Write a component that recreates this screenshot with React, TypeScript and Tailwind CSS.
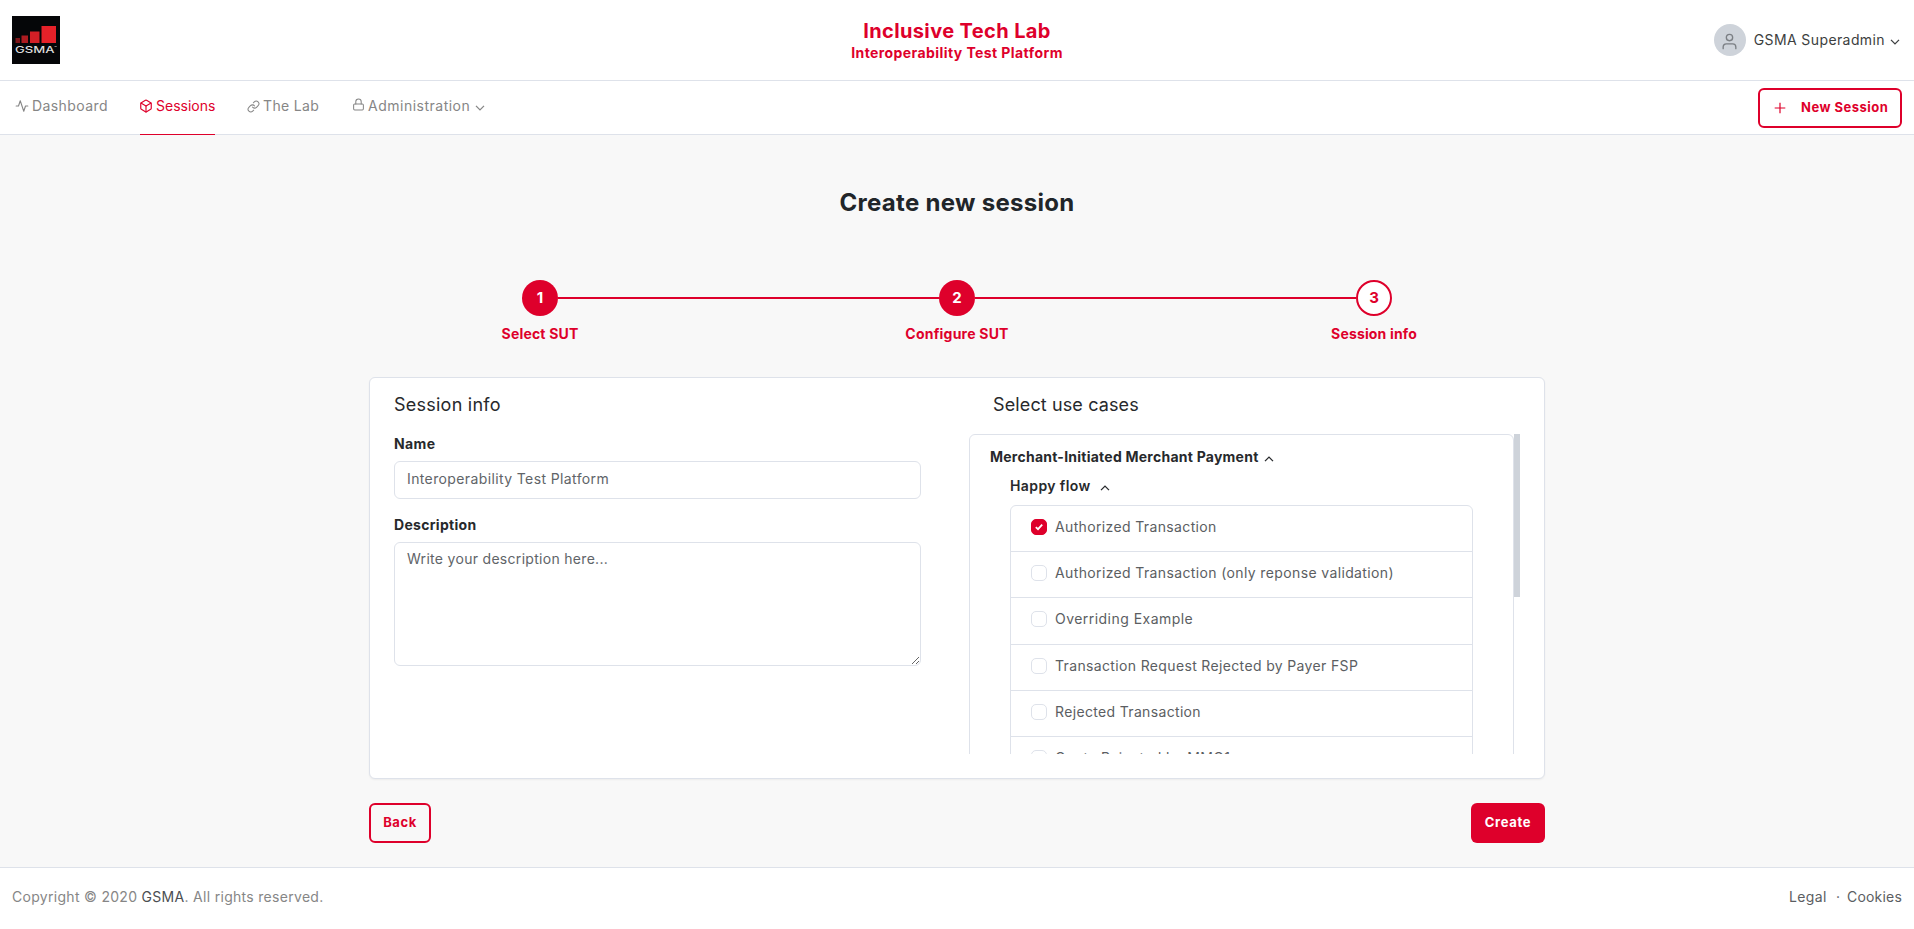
import { useState } from "react";
import { FiActivity, FiBox, FiLink, FiLock, FiUser } from "react-icons/fi";

function Chevron({ up = false, className = "" }: { up?: boolean; className?: string }) {
  return (
    <svg viewBox="0 0 10 6" width="10" height="6" fill="none" stroke="currentColor" strokeWidth="1.3" className={className}>
      <path d={up ? "M1 5.1 5 1.1 9 5.1" : "M1 .9 5 4.9 9 .9"} />
    </svg>
  );
}

function Logo() {
  return (
    <svg viewBox="0 0 48 48" width="48" height="48" role="img" aria-label="GSMA">
      <rect width="48" height="48" fill="#050608" />
      <rect x="3.5" y="22" width="4.5" height="5" fill="#7d1519" />
      <rect x="9.5" y="19.5" width="6.5" height="7.5" fill="#ac1b20" />
      <rect x="18" y="15.5" width="9.5" height="11.5" fill="#d31f26" />
      <rect x="29.5" y="10" width="14.5" height="17" fill="#e62129" />
      <text x="3" y="37" textLength="39.5" lengthAdjust="spacingAndGlyphs" fontFamily="Inter, sans-serif" fontSize="9.3" fontWeight="500" fill="#dcdcdc">
        GSMA
      </text>
      <rect x="42.5" y="30" width="2.2" height="0.9" fill="#8a8a8a" />
    </svg>
  );
}

const useCases = [
  { label: "Authorized Transaction", tracking: "tracking-[0.36px]" },
  { label: "Authorized Transaction (only reponse validation)", tracking: "tracking-[0.37px]" },
  { label: "Overriding Example", tracking: "tracking-[0.46px]" },
  { label: "Transaction Request Rejected by Payer FSP", tracking: "tracking-[0.35px]" },
  { label: "Rejected Transaction", tracking: "tracking-[0.34px]" },
  { label: "Quote Rejected by MMO1", tracking: "tracking-[0.36px]" },
];

function Header() {
  return (
    <header className="flex h-[81px] items-center justify-between border-b border-[#dee2ea] bg-white px-3">
      <div className="w-[300px]">
        <Logo />
      </div>
      <div className="pt-[1px] text-center font-bold text-[#de002b]">
        <div className="text-[20px] leading-6 tracking-[0.38px]">Inclusive Tech Lab</div>
        <div className="text-[14px] leading-5 tracking-[0.42px]">Interoperability Test Platform</div>
      </div>
      <div className="flex w-[300px] items-center justify-end">
        <span className="flex size-8 items-center justify-center rounded-full bg-[#ced3da] text-[#7b7f84]">
          <FiUser className="mt-[3px] size-[19px]" strokeWidth={1.7} />
        </span>
        <span className="ml-2 pb-px text-[14px] tracking-[0.4px] text-[#3c3e40]">GSMA Superadmin</span>
        <Chevron className="ml-[5px] mr-[2px] mt-[3px] text-[#3c3e40]" />
      </div>
    </header>
  );
}

function Nav() {
  return (
    <nav className="flex h-[54px] items-stretch justify-between border-b border-[#dee2ea] bg-white pl-[15px] pr-3 text-[14px] text-[#868686]">
      <div className="flex items-stretch pb-[3px]">
        <a className="flex w-[125px] items-center">
          <FiActivity className="mr-[3px] size-[14px]" strokeWidth={1.9} />
          <span className="pb-[2px] tracking-[0.42px]">Dashboard</span>
        </a>
        <a className="-mb-1 flex w-[75px] items-center border-b border-[#de002b] pb-[3px] text-[#de002b]">
          <FiBox className="-ml-px mr-[3px] size-[14px] shrink-0" strokeWidth={2} />
          <span className="pb-[2px] tracking-[0px]">Sessions</span>
        </a>
        <a className="ml-8 flex w-[105px] items-center">
          <FiLink className="mr-[3px] size-[13px]" strokeWidth={1.9} />
          <span className="pb-[2px] tracking-[0.35px]">The Lab</span>
        </a>
        <a className="flex items-center">
          <FiLock className="mb-1 mr-[3px] size-[13px]" strokeWidth={1.9} />
          <span className="pb-[2px] tracking-[0.5px]">Administration</span>
          <Chevron className="ml-[5px] mt-[3px]" />
        </a>
      </div>
      <button className="mt-[7px] flex h-10 w-[144px] items-center rounded-[6px] border-2 border-[#de002b] bg-white pl-3.5 text-[13px] font-bold text-[#de002b]">
        <svg viewBox="0 0 12 12" width="12" height="12" fill="none" stroke="currentColor" strokeWidth="1.2">
          <path d="M6 .7v10.6M.7 6h10.6" />
        </svg>
        <span className="ml-[15px] tracking-[0.48px]">New Session</span>
      </button>
    </nav>
  );
}

function Step({ n, label, current = false, tracking }: { n: number; label: string; current?: boolean; tracking: string }) {
  return (
    <li className="flex w-9 flex-col items-center">
      <span
        className={
          current
            ? "flex size-9 items-center justify-center rounded-full border-2 border-[#de002b] bg-white text-[15px] font-bold text-[#de002b]"
            : "flex size-9 items-center justify-center rounded-full bg-[#de002b] text-[15px] font-bold text-white"
        }
      >
        {n}
      </span>
      <span className={"mt-2 whitespace-nowrap text-[14px] font-bold leading-5 text-[#de002b] " + tracking}>{label}</span>
    </li>
  );
}

function Connector() {
  return <li className="mt-[17px] h-0.5 flex-1 bg-[#de002b]" />;
}

export default function App() {
  const [checked, setChecked] = useState<number[]>([0]);
  const toggle = (i: number) => setChecked((c) => (c.includes(i) ? c.filter((x) => x !== i) : [...c, i]));

  return (
    <div className="flex h-[929px] flex-col overflow-hidden bg-[#f8f8f8] font-[Inter,sans-serif] text-[#27292c]">
      <Header />
      <Nav />
      <main className="mx-auto flex w-[1176px] flex-1 flex-col">
        <h1 className="mt-[52px] text-center text-[24px] font-bold leading-8 tracking-[0.3px] text-[#212529]">Create new session</h1>
        <ol className="mx-auto mt-[61px] flex h-[97px] w-[870px]">
          <Step n={1} label="Select SUT" tracking="tracking-[0.18px]" />
          <Connector />
          <Step n={2} label="Configure SUT" tracking="tracking-[0.22px]" />
          <Connector />
          <Step n={3} label="Session info" current tracking="tracking-[0.16px]" />
        </ol>

        <section className="flex h-[402px] rounded-[6px] border border-[#dee2ea] bg-white pl-6 pr-6 shadow-[0_1px_2px_rgba(0,0,0,0.05)]">
          <div className="w-[527px]">
            <h2 className="mt-[13px] text-[18px] leading-7 tracking-[0.24px]">Session info</h2>
            <label className="mt-[15px] block text-[14px] font-bold leading-5 tracking-[0.4px]">Name</label>
            <input
              className="mt-[7px] block h-[38px] w-full rounded-[6px] border border-[#dee2ea] bg-white px-3 pb-[4px] text-[14px] tracking-[0.38px] text-[#606468] outline-none"
              defaultValue="Interoperability Test Platform"
            />
            <label className="mt-4 block text-[14px] font-bold leading-5 tracking-[0.3px]">Description</label>
            <textarea
              className="mt-[7px] block h-[124px] w-full resize rounded-[6px] border border-[#dee2ea] bg-white px-3 pt-[6px] text-[14px] leading-5 tracking-[0.3px] text-[#606468] outline-none placeholder:text-[#606468]"
              placeholder="Write your description here..."
            />
          </div>

          <div className="ml-12 flex w-[551px] flex-col">
            <h2 className="ml-6 mt-[13px] text-[18px] leading-7 tracking-[0.12px]">Select use cases</h2>
            <div className="mt-[15px] flex h-[320px] overflow-hidden">
              <div className="h-[700px] w-[545px] shrink-0 rounded-[6px] border border-[#dee2ea] pl-5 pr-10">
                <button className="mt-[12px] flex items-center text-[14px] font-bold leading-5 tracking-[0.24px]">
                  Merchant-Initiated Merchant Payment
                  <Chevron up className="ml-[5px] mt-[3px]" />
                </button>
                <button className="ml-5 mt-[9px] flex items-center text-[14px] font-semibold leading-5 tracking-[0.4px]">
                  Happy flow
                  <Chevron up className="ml-[9px] mt-[3px]" />
                </button>
                <ul className="ml-5 mt-[9px] rounded-[6px] border border-[#dee2ea]">
                  {useCases.map((u, i) => (
                    <li key={u.label} className="h-[46.2px] border-b border-[#dee2ea] pl-5">
                      <label className="flex h-[42px] items-center">
                        <input type="checkbox" className="peer sr-only" checked={checked.includes(i)} onChange={() => toggle(i)} />
                        <span className="flex size-4 items-center justify-center rounded-[5px] border border-[#dee2ea] text-transparent peer-checked:border-[#de002b] peer-checked:bg-[#de002b] peer-checked:text-white">
                          <svg viewBox="0 0 8 8" width="8" height="8" fill="none" stroke="currentColor" strokeWidth="1.8">
                            <path d="M.8 4.2 3 6.2 7.2 1.6" />
                          </svg>
                        </span>
                        <span className={"ml-2 text-[14px] leading-5 text-[#5b5e62] " + u.tracking}>{u.label}</span>
                      </label>
                    </li>
                  ))}
                </ul>
              </div>
              <div className="h-[163px] w-1.5 bg-[#ced3da]" />
            </div>
          </div>
        </section>

        <div className="mt-6 flex justify-between">
          <button className="h-10 w-[62px] rounded-[6px] border-2 border-[#de002b] text-[13px] font-bold tracking-[0.6px] text-[#de002b]">Back</button>
          <button className="h-10 w-[74px] rounded-[6px] bg-[#de002b] text-[13px] font-bold tracking-[0.65px] text-white">Create</button>
        </div>
      </main>

      <footer className="flex h-[62px] items-center justify-between border-t border-[#dee2ea] bg-white px-3 pb-[4px] text-[14px] text-[#868686]">
        <p className="tracking-[0.3px]">
          Copyright © 2020 <a className="text-[#4b4e52]">GSMA</a>. All rights reserved.
        </p>
        <p className="flex text-[#5b5e62]">
          <a className="tracking-[0.4px]">Legal</a>
          <span className="ml-[9px] mr-[7px]">·</span>
          <a className="tracking-[0.2px]">Cookies</a>
        </p>
      </footer>
    </div>
  );
}
